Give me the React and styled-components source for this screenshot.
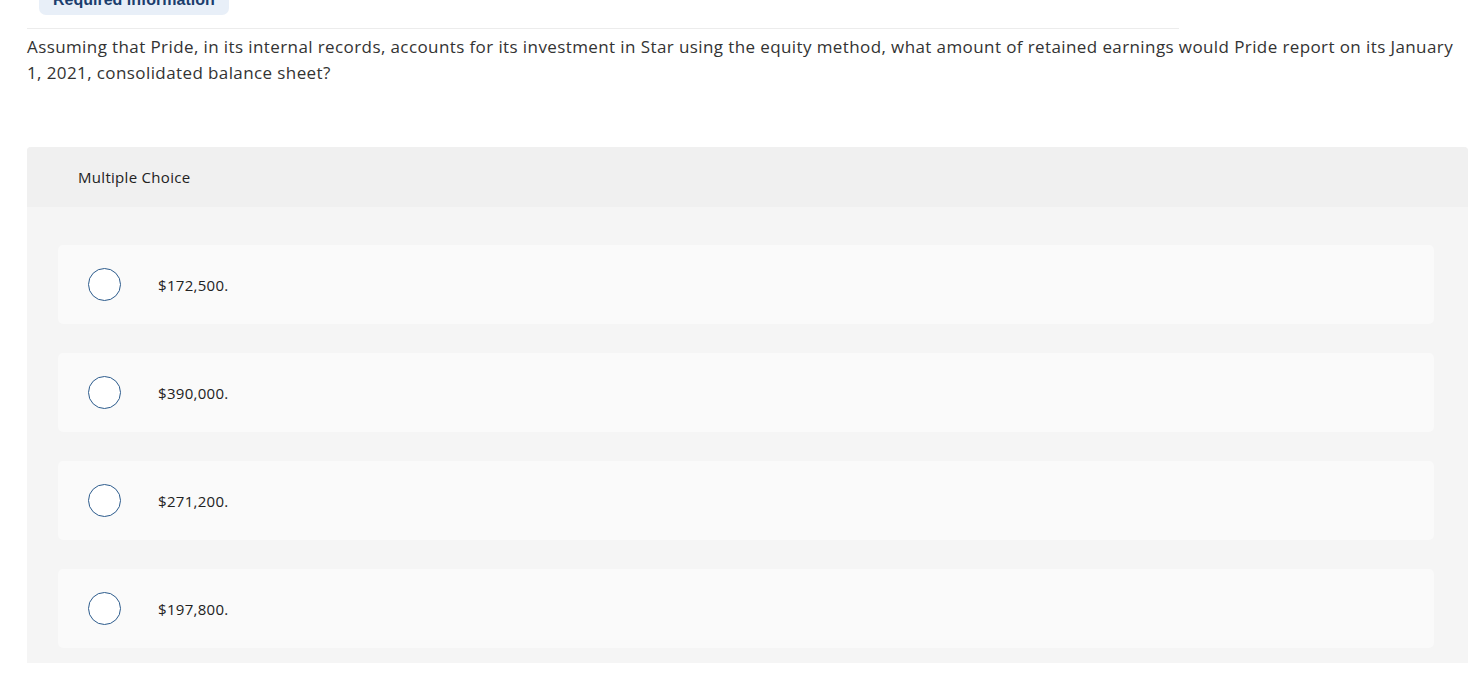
import React from "react";
import styled, { createGlobalStyle } from "styled-components";

const Global = createGlobalStyle`
  html, body { margin: 0; padding: 0; background: #fff; }
  body { font-family: "Open Sans", Lato, Arial, sans-serif; overflow: hidden; }
`;

const Page = styled.div`
  padding: 0 12px 0 27px;
  display: flex;
  flex-direction: column;
  align-items: flex-start;
`;

const Badge = styled.div`
  margin-top: -15px;
  margin-left: 12px;
  height: 30px;
  padding: 0 14px;
  background: #e8eff8;
  border-radius: 0 0 7px 7px;
  color: #1b3d6d;
  font-family: Arial, "Liberation Sans", sans-serif;
  font-weight: 700;
  font-size: 16px;
  line-height: 30px;
  overflow: hidden;
`;

const Rule = styled.div`
  margin-top: 13px;
  width: 1152px;
  border-top: 1px solid #ececec;
`;

const Question = styled.p`
  margin: 5px 0 0;
  max-width: 1441px;
  font-size: 17px;
  line-height: 26px;
  letter-spacing: 0.4px;
  color: #333;
`;

const Panel = styled.section`
  margin-top: 61px;
  width: 1441px;
  background: #f5f5f5;
  border-radius: 4px 4px 0 0;
`;

const PanelHeader = styled.div`
  height: 60px;
  display: flex;
  align-items: center;
  padding-left: 51px;
  background: #f0f0f0;
  border-radius: 4px 4px 0 0;
  font-size: 15px;
  letter-spacing: 0.3px;
  color: #222;
`;

const Options = styled.div`
  display: flex;
  flex-direction: column;
  gap: 29px;
  padding: 38px 34px 15px 31px;
`;

const Option = styled.label`
  height: 79px;
  display: flex;
  align-items: center;
  gap: 37px;
  padding-left: 30px;
  background: #fafafa;
  border-radius: 5px;
  font-size: 15px;
  letter-spacing: 0.3px;
  color: #222;
  cursor: pointer;
`;

const Radio = styled.span`
  width: 33px;
  height: 33px;
  box-sizing: border-box;
  border-radius: 50%;
  border: 1.5px solid #2c5b8c;
  background: #fff;
  flex-shrink: 0;
`;

const choices = ["$172,500.", "$390,000.", "$271,200.", "$197,800."];

export default function App() {
  return (
    <>
      <Global />
      <Page>
        <Badge>Required information</Badge>
        <Rule />
        <Question>
          Assuming that Pride, in its internal records, accounts for its investment in Star using the equity method, what amount of retained earnings would Pride report on its January
          <br />
          1, 2021, consolidated balance sheet?
        </Question>
        <Panel>
          <PanelHeader>Multiple Choice</PanelHeader>
          <Options>
            {choices.map((c) => (
              <Option key={c}>
                <Radio />
                <span>{c}</span>
              </Option>
            ))}
          </Options>
        </Panel>
      </Page>
    </>
  );
}
